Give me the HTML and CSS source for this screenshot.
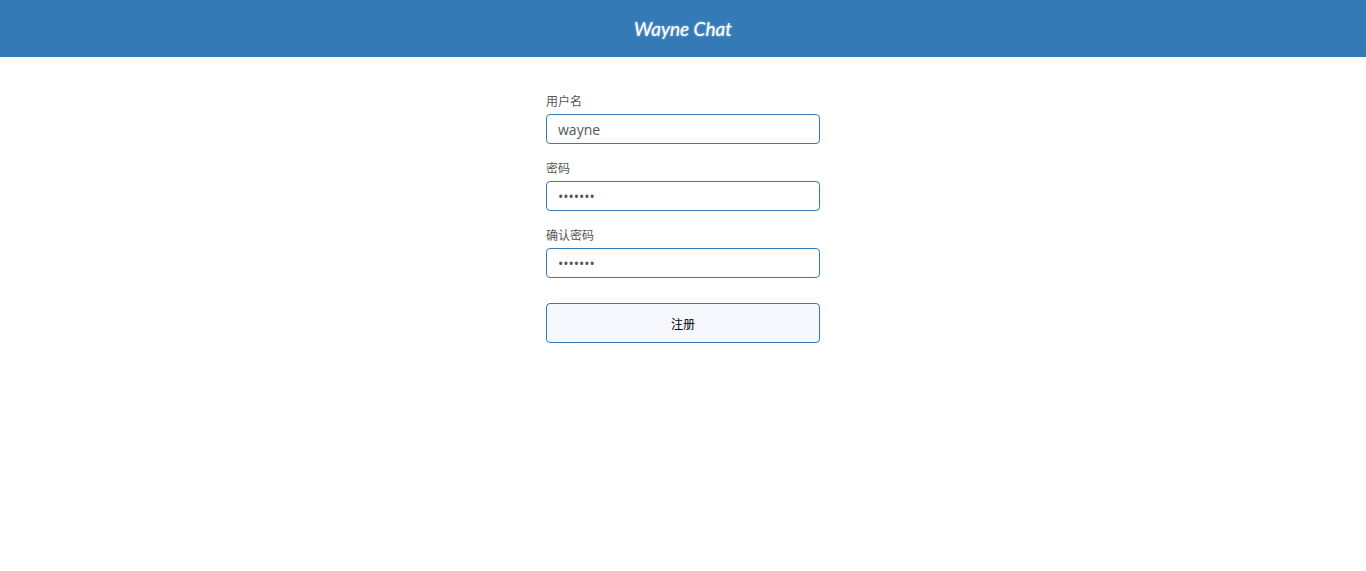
FILE: index.html
```html
<!DOCTYPE html>
<html lang="zh">
<head>
<meta charset="utf-8">
<title>Wayne Chat</title>
<link rel="stylesheet" href="styles.css">
</head>
<body>
<header class="topbar"><h1 class="brand">Wayne Chat</h1></header>
<main class="page">
  <form class="form">
    <div class="group">
      <label class="label">用户名</label>
      <input class="input" type="text" value="wayne">
    </div>
    <div class="group">
      <label class="label">密码</label>
      <input class="input input-pw" type="password" value="1234567">
    </div>
    <div class="group">
      <label class="label">确认密码</label>
      <input class="input input-pw" type="password" value="1234567">
    </div>
    <button class="btn" type="button">注册</button>
  </form>
</main>
</body>
</html>
```
FILE: styles.css
```css
* { box-sizing: border-box; }
html, body { margin: 0; padding: 0; background: #fff; }
body { font-family: "Open Sans", "Noto Sans CJK SC", sans-serif; color: #333; }
.topbar {
  height: 57px;
  background: #337ab7;
  display: flex;
  align-items: center;
  justify-content: center;
}
.brand {
  margin: 0;
  font-family: Lato, "Open Sans", sans-serif;
  font-style: italic;
  font-weight: 400;
  font-size: 19px;
  color: #fff;
  text-shadow: 0 0 2px rgba(255,255,255,0.7);
}
.page { display: flex; justify-content: center; padding-top: 35px; }
.form { width: 274px; display: flex; flex-direction: column; }
.group { display: flex; flex-direction: column; margin-bottom: 15px; }
.group:last-of-type { margin-bottom: 25px; }
.label {
  font-family: "Noto Sans CJK SC", sans-serif;
  font-size: 12px;
  line-height: 17px;
  color: #555;
  margin-bottom: 5px;
}
.input {
  height: 30px;
  border: 1px solid #337ab7;
  border-radius: 4px;
  padding: 0 11px;
  font-family: "Open Sans", sans-serif;
  font-size: 14px;
  color: #555;
  background: #fff;
  outline: none;
}
.input-pw { color: #4a5560; }
.btn {
  height: 40px;
  border: 1px solid #337ab7;
  border-radius: 4px;
  background: #f5f8fd;
  font-family: "Noto Sans CJK SC", sans-serif;
  font-size: 12px;
  color: #000;
  padding: 0;
}
```
